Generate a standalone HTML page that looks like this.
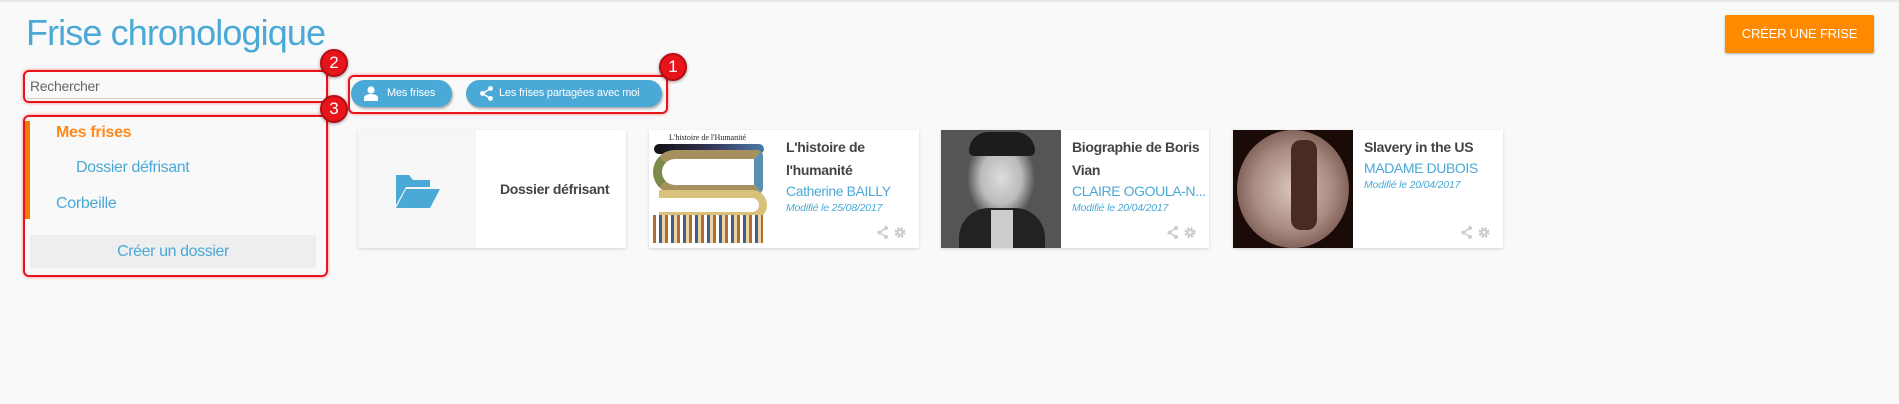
<!DOCTYPE html>
<html><head><meta charset="utf-8"><style>
*{box-sizing:border-box;margin:0;padding:0}
body{width:1899px;height:404px;background:#f9f9f9;font-family:"Liberation Sans",Arial,sans-serif;position:relative;overflow:hidden}
.a{position:absolute}
.top{left:0;top:0;width:1899px;height:3px;background:linear-gradient(#e2e2e2,#f9f9f9)}
h1{position:absolute;left:26px;top:12px;font-size:36px;font-weight:normal;color:#4aa9d6;letter-spacing:-0.9px}
.obtn{left:1725px;top:15px;width:149px;height:38px;background:#ff8a00;color:#fff;font-size:13px;text-align:center;line-height:38px;border-radius:2px;box-shadow:0 1px 2px rgba(0,0,0,.3);letter-spacing:-0.2px}
.red{border:2px solid #e8141b;border-radius:6px;box-shadow:0 0 3px rgba(232,20,27,.5)}
.badge{width:28px;height:28px;border-radius:50%;background:#e8141b;border:2px solid #b40d12;color:#fff;font-size:17px;text-align:center;line-height:24px;box-shadow:0 1px 3px rgba(0,0,0,.4)}
.bbtn{height:27px;border-radius:14px;background:#4aa9d6;color:#fff;font-size:11px;line-height:27px;box-shadow:1px 2px 2px rgba(0,0,0,.3);letter-spacing:-0.2px;white-space:nowrap}
.card{background:#fff;box-shadow:0 1px 3px rgba(0,0,0,.15);height:118px;top:130px}
.ct{font-size:14px;font-weight:bold;color:#444;line-height:23px;white-space:nowrap;letter-spacing:-0.3px}
.au{font-size:14px;color:#4aa9d6;white-space:nowrap;letter-spacing:-0.4px}
.md{font-size:10.5px;font-style:italic;color:#4aa9d6;letter-spacing:-0.2px}
</style></head><body>
<div class="a top"></div>
<h1>Frise chronologique</h1>
<div class="a obtn">CRÉER UNE FRISE</div>

<div class="a red" style="left:23px;top:70px;width:305px;height:33px"></div>
<div class="a" style="left:27px;top:76px;width:295px;height:23px;border-bottom:1px solid #ccc;font-size:14px;color:#666;padding-left:3px;line-height:20px;letter-spacing:-0.3px">Rechercher</div>

<div class="a red" style="left:348px;top:75px;width:320px;height:39px"></div>
<div class="a bbtn" style="left:351px;top:80px;width:101px;padding-left:36px">Mes frises</div>
<svg class="a" style="left:364px;top:86px" width="14" height="15" viewBox="0 0 14 15"><circle cx="7" cy="4" r="3.6" fill="#fff"/><path d="M0 15v-3c0-2.5 3-4 7-4s7 1.5 7 4v3z" fill="#fff"/></svg>
<div class="a bbtn" style="left:466px;top:80px;width:196px;padding-left:33px">Les frises partagées avec moi</div>
<svg class="a" style="left:480px;top:86px" width="13" height="15" viewBox="0 0 13 15"><circle cx="10.5" cy="2.5" r="2.4" fill="#fff"/><circle cx="2.5" cy="7.5" r="2.4" fill="#fff"/><circle cx="10.5" cy="12.5" r="2.4" fill="#fff"/><path d="M10.5 2.5L2.5 7.5L10.5 12.5" stroke="#fff" stroke-width="1.5" fill="none"/></svg>

<div class="a red" style="left:23px;top:115px;width:305px;height:162px"></div>
<div class="a" style="left:25px;top:121px;width:5px;height:98px;background:#ef7d00"></div>
<div class="a" style="left:56px;top:124px;font-size:16px;font-weight:bold;color:#ff8a1c;letter-spacing:-0.3px">Mes frises</div>
<div class="a" style="left:76px;top:159px;font-size:16px;color:#4aa9d6;letter-spacing:-0.4px">Dossier défrisant</div>
<div class="a" style="left:56px;top:195px;font-size:16px;color:#4aa9d6;letter-spacing:-0.3px">Corbeille</div>
<div class="a" style="left:30px;top:235px;width:286px;height:33px;background:#eeeeee;color:#4aa9d6;font-size:16px;text-align:center;line-height:33px;letter-spacing:-0.4px">Créer un dossier</div>

<div class="a badge" style="left:659px;top:53px">1</div>
<div class="a badge" style="left:320px;top:49px">2</div>
<div class="a badge" style="left:320px;top:95px">3</div>

<div class="a card" style="left:358px;width:268px">
 <div class="a" style="left:0;top:0;width:118px;height:118px;background:#f6f6f6"></div>
 <svg class="a" style="left:36px;top:42px" width="46" height="36" viewBox="0 0 46 36"><path d="M2 3h13l4 5h17v7H12L2 33z" fill="#4aa9d6"/><path d="M12 17h34L36 36H2z" fill="#4aa9d6"/></svg>
 <div class="a ct" style="left:142px;top:48px">Dossier défrisant</div>
</div>

<div class="a card" style="left:649px;width:270px">
 <div class="a" style="left:0;top:0;width:130px;height:118px;background:#fff">
  <div class="a" style="left:20px;top:3px;font-family:'Liberation Serif',serif;font-size:8px;color:#222">L'histoire de l'Humanité</div>
  <div class="a" style="left:5px;top:14px;width:110px;height:10px;border-radius:5px;background:linear-gradient(90deg,#111,#335,#4a7aa8)"></div>
  <div class="a" style="left:4px;top:20px;width:110px;height:44px;border:9px solid #a79060;border-left-color:#7c8a4a;border-radius:22px 6px 6px 22px;border-right-color:#5a8fb0"></div>
  <div class="a" style="left:10px;top:60px;width:108px;height:30px;border:8px solid #d8c27a;border-left:none;border-radius:0 20px 20px 0"></div>
  <div class="a" style="left:4px;top:85px;width:110px;height:28px;background:repeating-linear-gradient(90deg,#b56a3a 0 3px,#fff 3px 6px,#4a5a8a 6px 9px,#e8d7a0 9px 12px)"></div>
 </div>
 <div class="a ct" style="left:137px;top:6px">L'histoire de<br>l'humanité</div>
 <div class="a au" style="left:137px;top:53px">Catherine BAILLY</div>
 <div class="a md" style="left:137px;top:72px">Modifié le 25/08/2017</div>
 <svg class="a" style="left:228px;top:96px" width="30" height="13" viewBox="0 0 30 13"><circle cx="9" cy="2" r="2" fill="#ccc"/><circle cx="2.5" cy="6.5" r="2" fill="#ccc"/><circle cx="9" cy="11" r="2" fill="#ccc"/><path d="M9 2L2.5 6.5L9 11" stroke="#ccc" stroke-width="1.5" fill="none"/><circle cx="23" cy="6.5" r="4" fill="none" stroke="#ccc" stroke-width="3" stroke-dasharray="2 1.2"/><circle cx="23" cy="6.5" r="3.5" fill="#ccc"/><circle cx="23" cy="6.5" r="1.5" fill="#fff"/></svg>
</div>

<div class="a card" style="left:941px;width:268px">
 <div class="a" style="left:0;top:0;width:120px;height:118px;background:radial-gradient(ellipse 34px 44px at 60px 48px,#ddd 0,#bbb 60%,#555 100%) ,#333;background-color:#2a2a2a">
  <div class="a" style="left:18px;top:78px;width:86px;height:40px;background:#222;border-radius:30px 30px 0 0"></div>
  <div class="a" style="left:50px;top:80px;width:22px;height:38px;background:#ccc"></div>
  <div class="a" style="left:28px;top:2px;width:66px;height:24px;background:#1c1c1c;border-radius:30px 30px 8px 8px"></div>
 </div>
 <div class="a ct" style="left:131px;top:6px">Biographie de Boris<br>Vian</div>
 <div class="a au" style="left:131px;top:53px">CLAIRE OGOULA-N...</div>
 <div class="a md" style="left:131px;top:72px">Modifié le 20/04/2017</div>
 <svg class="a" style="left:226px;top:96px" width="30" height="13" viewBox="0 0 30 13"><circle cx="9" cy="2" r="2" fill="#ccc"/><circle cx="2.5" cy="6.5" r="2" fill="#ccc"/><circle cx="9" cy="11" r="2" fill="#ccc"/><path d="M9 2L2.5 6.5L9 11" stroke="#ccc" stroke-width="1.5" fill="none"/><circle cx="23" cy="6.5" r="4" fill="none" stroke="#ccc" stroke-width="3" stroke-dasharray="2 1.2"/><circle cx="23" cy="6.5" r="3.5" fill="#ccc"/><circle cx="23" cy="6.5" r="1.5" fill="#fff"/></svg>
</div>

<div class="a card" style="left:1233px;width:270px">
 <div class="a" style="left:0;top:0;width:120px;height:118px;background:#1a0a08">
  <div class="a" style="left:4px;top:0;width:112px;height:118px;border-radius:50%;background:radial-gradient(ellipse at 50% 50%,#d9c6bd 0,#a88a80 50%,#6b4a42 85%,#2a1410 100%)"></div>
  <div class="a" style="left:58px;top:10px;width:26px;height:90px;background:#4a2a24;border-radius:10px"></div>
 </div>
 <div class="a ct" style="left:131px;top:6px">Slavery in the US</div>
 <div class="a au" style="left:131px;top:30px">MADAME DUBOIS</div>
 <div class="a md" style="left:131px;top:49px">Modifié le 20/04/2017</div>
 <svg class="a" style="left:228px;top:96px" width="30" height="13" viewBox="0 0 30 13"><circle cx="9" cy="2" r="2" fill="#ccc"/><circle cx="2.5" cy="6.5" r="2" fill="#ccc"/><circle cx="9" cy="11" r="2" fill="#ccc"/><path d="M9 2L2.5 6.5L9 11" stroke="#ccc" stroke-width="1.5" fill="none"/><circle cx="23" cy="6.5" r="4" fill="none" stroke="#ccc" stroke-width="3" stroke-dasharray="2 1.2"/><circle cx="23" cy="6.5" r="3.5" fill="#ccc"/><circle cx="23" cy="6.5" r="1.5" fill="#fff"/></svg>
</div>
</body></html>
